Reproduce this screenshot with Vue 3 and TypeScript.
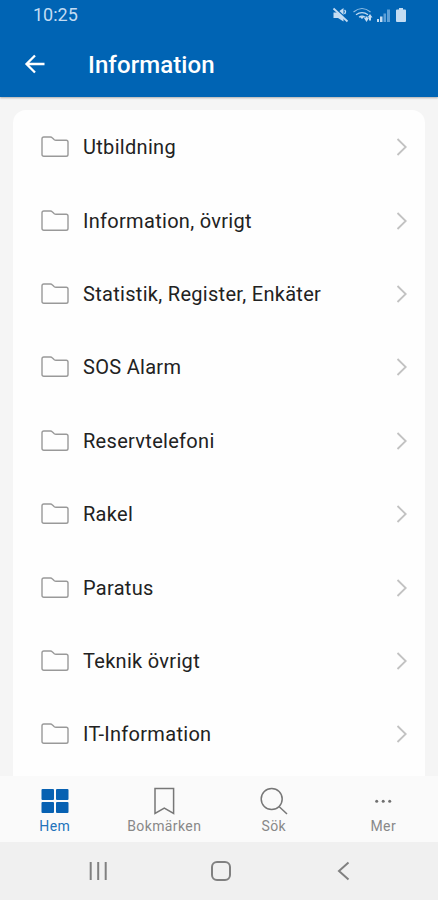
<script setup lang="ts">
interface Folder {
  name: string
}

const folders: Folder[] = [
  { name: 'Utbildning' },
  { name: 'Information, övrigt' },
  { name: 'Statistik, Register, Enkäter' },
  { name: 'SOS Alarm' },
  { name: 'Reservtelefoni' },
  { name: 'Rakel' },
  { name: 'Paratus' },
  { name: 'Teknik övrigt' },
  { name: 'IT-Information' },
]
</script>

<template>
  <div class="screen">
    <header class="header">
      <div class="status">
        <span class="time">10:25</span>
        <svg class="status-icons" width="76" height="18" viewBox="0 0 76 18" fill="#c3dcf3">
          <path d="M1.500 5.500h4L11.500 1v13.500L6 11H1.500z" />
          <path d="M12.500 3q2 1.500 0 4" fill="none" stroke="#c3dcf3" stroke-width="1.400" />
          <path d="M2.500 0.500L16 13" stroke="#0064b4" stroke-width="1.500" />
          <path d="M1.500 1.500l14 13" stroke="#c3dcf3" stroke-width="1.800" />
          <g fill="none" stroke="#8dbce4" stroke-width="1.200">
            <path d="M21.500 5q8.500-7 17 0" />
            <path d="M24 7.800q6-4.500 12 0" stroke="#c3dcf3" />
            <path d="M27 10.300q3-2.500 6 0" stroke="#c3dcf3" />
          </g>
          <path d="M27.500 9.500h5L30 12zM32 11h1.500V9.500h2V11H37l-2.500 4zM35.500 10.500L38 7l2.500 3.500H39v3h-2v-3z" />
          <path d="M45 12h2v3h-2zM48 9.500h2.500V15H48z" />
          <path d="M51.500 6.500H54V15h-2.500zM55 2.500h3V15h-3z" fill="#5c9fd7" />
          <path d="M67 1h4v1.500h2q1 0 1 1V14q0 1-1 1h-8q-1 0-1-1V3.500q0-1 1-1h2z" />
        </svg>
      </div>
      <div class="titlebar">
        <svg class="back" width="22" height="22" viewBox="0 0 22 22">
          <path d="M20.500 11H3M11 2.500L2.500 11l8.500 8.500" />
        </svg>
        <h1>Information</h1>
      </div>
    </header>

    <main class="content">
      <ul class="card">
        <li v-for="folder in folders" :key="folder.name" class="row">
          <svg class="folder" width="28" height="22" viewBox="0 0 28 22">
            <path d="M1 18.500V2.800Q1 1 2.800 1H9.500q1 0 1.700.7l2.100 2q.7.600 1.700.6h10.200q1.800 0 1.800 1.800v12.400q0 1.800-1.800 1.800H2.800Q1 20.300 1 18.500z" />
          </svg>
          <span class="label">{{ folder.name }}</span>
          <svg class="chevron" width="12" height="20" viewBox="0 0 12 20">
            <path d="M1.500 2L9.700 10l-8.200 8" />
          </svg>
        </li>
      </ul>
    </main>

    <nav class="tabs">
      <div class="tab active">
        <svg width="28" height="28" viewBox="0 0 28 28" fill="#0761b2">
          <rect x="0.500" y="2" width="12.500" height="11" rx="1" />
          <rect x="15" y="2" width="12.500" height="11" rx="1" />
          <rect x="0.500" y="15" width="12.500" height="11" rx="1" />
          <rect x="15" y="15" width="12.500" height="11" rx="1" />
        </svg>
        <span>Hem</span>
      </div>
      <div class="tab">
        <svg class="line" width="28" height="28" viewBox="0 0 28 28">
          <path d="M5 1.500h18.600v25L14.300 21.200 5 26.500z" />
        </svg>
        <span>Bokmärken</span>
      </div>
      <div class="tab">
        <svg class="line" width="28" height="28" viewBox="0 0 28 28">
          <circle cx="11.700" cy="12" r="10.500" />
          <path d="M19 19.500l8 7.500" />
        </svg>
        <span>Sök</span>
      </div>
      <div class="tab">
        <svg width="28" height="28" viewBox="0 0 28 28" fill="#707070">
          <circle cx="7.700" cy="14.200" r="1.500" />
          <circle cx="14.200" cy="14.200" r="1.500" />
          <circle cx="20.700" cy="14.200" r="1.500" />
        </svg>
        <span>Mer</span>
      </div>
    </nav>

    <footer class="system">
      <svg width="20" height="20" viewBox="0 0 20 20">
        <path d="M2.700 1v18M10.200 1v18M17.700 1v18" />
      </svg>
      <svg width="20" height="20" viewBox="0 0 20 20">
        <rect x="1" y="1" width="18" height="18" rx="5" />
      </svg>
      <svg width="20" height="20" viewBox="0 0 20 20">
        <path d="M14.500 1.500L5 10l9.500 8.500" />
      </svg>
    </footer>
  </div>
</template>

<style>
body {
  margin: 0;
}
</style>

<style scoped>
.screen {
  display: flex;
  flex-direction: column;
  height: 900px;
  overflow: hidden;
  background: #f5f5f5;
  font-family: Roboto, sans-serif;
}
.header {
  flex: none;
  height: 97px;
  background: #0064b4;
  box-shadow: 0 1px 2px rgba(0, 0, 0, 0.3);
}
.status {
  display: flex;
  justify-content: space-between;
  height: 30px;
  padding: 0 30px 0 33px;
  color: #c3dcf3;
}
.time {
  font-size: 18px;
  line-height: 30px;
}
.status-icons {
  margin-top: 7px;
}
.titlebar {
  display: flex;
  align-items: center;
  height: 68px;
  padding-left: 24px;
  gap: 42px;
  color: #fff;
}
.back {
  fill: none;
  stroke: #fff;
  stroke-width: 2.3;
}
h1 {
  margin: 2px 0 0;
  font-size: 24px;
  font-weight: 500;
  line-height: 30px;
  letter-spacing: 0.1px;
}
.content {
  flex: none;
  box-sizing: border-box;
  height: 679px;
  padding: 13px 13px 0;
}
.card {
  box-sizing: border-box;
  height: 666px;
  margin: 0;
  padding: 0.5px 0 0;
  list-style: none;
  border-radius: 13px 13px 0 0;
  background: #fefefe;
}
.row {
  display: flex;
  align-items: center;
  height: 73.4px;
  padding: 0 17px 0 28px;
}
.folder {
  fill: none;
  stroke: #999;
  stroke-width: 1.4;
}
.label {
  flex: 1;
  margin-left: 14px;
  color: #222;
  font-size: 20px;
  line-height: 28px;
  letter-spacing: 0.3px;
}
.chevron {
  fill: none;
  stroke: #c2c2c2;
  stroke-width: 1.8;
}
.tabs {
  display: grid;
  grid-template-columns: repeat(4, 109.5px);
  flex: none;
  height: 66px;
  background: #fafafa;
}
.tab {
  display: flex;
  flex-direction: column;
  align-items: center;
  padding-top: 11px;
  color: #888;
  font-size: 14px;
  line-height: 16px;
  letter-spacing: 0.4px;
}
.tab span {
  margin-top: 3px;
}
.tab.active {
  color: #2373bb;
}
.line {
  fill: none;
  stroke: #777;
  stroke-width: 1.5;
}
.system {
  display: flex;
  justify-content: space-between;
  align-items: center;
  flex: 1;
  padding: 0 84px 0 88px;
  background: #f0f0f0;
}
.system svg {
  fill: none;
  stroke: #808080;
  stroke-width: 2;
}
</style>
